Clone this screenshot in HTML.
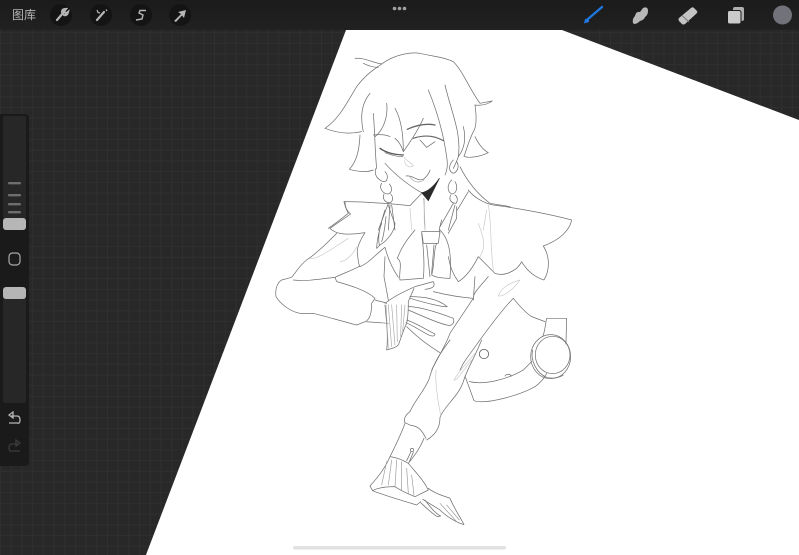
<!DOCTYPE html>
<html><head><meta charset="utf-8">
<style>
html,body{margin:0;padding:0;width:799px;height:555px;overflow:hidden;background:#262626}
#w{position:relative;width:799px;height:555px;overflow:hidden;contain:paint}
#s{position:absolute;left:-10px;top:-10px;filter:blur(.35px)}
.lbl{position:absolute;left:12px;top:8px;font:12px/15px "Liberation Sans","Noto Sans CJK SC",sans-serif;color:#b5b5b5;filter:blur(.3px)}
.l path,.l circle,.l ellipse{fill:none;stroke:#707070;stroke-width:2.2;stroke-linecap:round;stroke-linejoin:round}
.l .f{stroke:#c8c8c8;stroke-width:2}
</style></head><body><div id="w">
<svg id="s" width="819" height="575" viewBox="-10 -10 819 575" xmlns="http://www.w3.org/2000/svg">
<defs>
<pattern id="g" width="10.700" height="10.700" patternUnits="userSpaceOnUse"><rect width="11" height="11" fill="#282828"/><path d="M0 .5H11M.5 0V11" stroke="#2f2f2f"/></pattern>
<linearGradient id="top" x1="0" y1="0" x2="0" y2="1"><stop offset="0" stop-color="#191919"/><stop offset="1" stop-color="#212121"/></linearGradient>
</defs>
<rect x="-10" y="-10" width="819" height="575" fill="url(#g)"/>
<polygon points="346,30 562,30 812,125 812,568 141,568" fill="#fff"/>
<rect x="-10" y="-10" width="819" height="40" fill="url(#top)"/>

<!-- sidebar -->
<rect x="-6" y="114" width="35" height="352" rx="4" fill="#1a1a1a"/>
<rect x="3" y="116" width="23" height="106" rx="2" fill="#272727"/>
<rect x="3" y="296" width="23" height="107" rx="2" fill="#272727"/>
<g fill="#6e6e6e"><rect x="8" y="182" width="13" height="2.400" rx="1"/><rect x="8" y="194" width="13" height="2.400" rx="1"/><rect x="8" y="203" width="13" height="2.400" rx="1"/><rect x="8" y="211" width="13" height="2.400" rx="1"/></g>
<rect x="3" y="218" width="23" height="12" rx="3" fill="#b6b6b6"/>
<rect x="3" y="287" width="23" height="12" rx="3" fill="#b6b6b6"/>
<rect x="9" y="253" width="11" height="12" rx="3.500" fill="#1c1c1c" stroke="#a8a8a8" stroke-width="1.200"/>
<path d="M9 415L13 412V418ZM11 416H17Q20 416 20 420T17 423H9" fill="none" stroke="#b5b5b5" stroke-width="1.300"/>
<path d="M20 443L16 440V446ZM18 444H12Q9 444 9 448T12 451H20" fill="none" stroke="#3c3c3c" stroke-width="1.300"/>

<!-- top left icons -->
<g fill="#141414"><circle cx="61" cy="15" r="11"/><circle cx="101" cy="15" r="11"/><circle cx="141" cy="15" r="11"/><circle cx="180" cy="15" r="11"/></g>
<path d="M57 20L63 13M62 12Q62 9 66 9L64 11.500L66 13.500L68 12Q67 16 64 15" fill="none" stroke="#b5b5b5" stroke-width="2.200" stroke-linecap="round"/>
<path d="M97 20L104 12" stroke="#b5b5b5" stroke-width="2.200" stroke-linecap="round"/>
<path d="M97 10L98 12.500L100 13M106 9.500L107 11" stroke="#b5b5b5" stroke-width="1.200" fill="none"/>
<path d="M146 10.500L140 10.500L139 13L143 15L142 19L136 20" fill="none" stroke="#b5b5b5" stroke-width="1.400"/>
<path d="M174 21L181 14L178 12L186 10L184 18L182 15.500L176 22Z" fill="#b5b5b5"/>

<!-- dots -->
<g fill="#a0a0a0"><circle cx="394.500" cy="8.500" r="1.800"/><circle cx="399.500" cy="8.500" r="1.800"/><circle cx="404.500" cy="8.500" r="1.800"/></g>

<!-- right icons -->
<path d="M588 19L602 7" stroke="#1f78e0" stroke-width="2.300" stroke-linecap="round"/>
<path d="M584 23.500L585 19L589 18.500L589 22Z" fill="#1f78e0"/>
<path d="M633 23Q632 19 635 16Q636 11 640 12L643 8Q648 6 648 11Q648 15 645 17Q644 20 640 21Q637 24 634 24Z" fill="#b8b8b8"/>
<path d="M679 18L691 8Q693 6 695 9L697 11Q698 12 696 14L685 24Q683 25 682 24L679 21Q678 19 679 18Z" fill="#c4c4c4"/>
<path d="M682 15.500L689 22" stroke="#777" stroke-width="1"/>
<rect x="733" y="7" width="11" height="14" rx="2" fill="#b0b0b0"/>
<rect x="727.500" y="10.500" width="13.500" height="13.500" rx="2" fill="#cacaca" stroke="#1c1c1c" stroke-width="1"/>
<circle cx="782.500" cy="15" r="9.500" fill="#72727a"/>

<!-- home bar -->
<rect x="293" y="546" width="213" height="3.500" rx="1.700" fill="#e2e2e2"/>

<!-- head (zoom 5 coords) -->
<g class="l" transform="translate(320,40) scale(.3333)">
<path d="M105,55C130,52 160,68 185,72M130,70C145,78 160,82 175,82"/>
<path d="M15,265C60,235 85,180 110,140C140,100 170,82 200,62C230,45 270,35 300,40C330,48 370,50 400,65C430,95 450,150 480,190L517,183C500,195 480,197 465,195"/>
<path d="M15,265C40,275 80,285 125,275"/>
<path d="M120,285C118,330 110,365 88,388C110,395 140,398 160,390"/>
<path d="M130,275C120,230 125,190 150,160"/>
<path d="M160,220C165,280 165,340 170,385"/>
<path d="M200,190C205,230 190,270 165,290"/>
<path d="M225,205C245,240 250,290 250,335C245,320 238,305 225,295"/>
<path d="M310,235C295,270 275,300 250,335"/>
<path d="M325,150C350,210 370,280 380,350C385,380 380,395 375,405" />
<path d="M375,135C395,220 425,280 415,350C410,365 405,375 400,385"/>
<path d="M465,195C470,230 470,260 460,275C450,295 440,325 432,350"/>
<path d="M430,260C440,300 430,330 415,350"/>
<path d="M465,290C475,310 490,330 505,338C480,350 450,355 435,350"/>
<path d="M160,285C180,283 200,285 210,290"/>
<path d="M180,325C200,340 230,345 250,345" style="stroke:#555;stroke-width:4"/>
<path d="M195,338C215,346 235,350 248,350"/>
<path d="M262,268C290,255 320,250 345,255" style="stroke:#666;stroke-width:4"/>
<path d="M280,295C310,285 340,285 370,302" style="stroke:#666;stroke-width:3.500"/>
<path d="M300,300L320,322L345,305"/>
<path class="f" d="M252,352C258,362 276,368 280,378C268,385 256,378 253,362"/>
<path d="M258,408C280,405 290,425 310,418C322,408 328,398 330,390"/>
<path d="M270,412C285,430 300,428 312,420" style="stroke:#aaa"/>
<path d="M195,370C230,410 280,445 305,458"/>
<path d="M305,458L325,482L358,415C345,435 325,455 305,458Z" style="fill:#2a2a2a;stroke:#2a2a2a"/>
<path d="M168,385C160,405 175,420 190,425C205,425 205,405 195,395M185,430C175,445 190,462 205,462C220,455 215,440 208,432M192,462C185,480 200,490 212,488C222,478 218,468 212,462"/>
<path d="M400,360C385,375 385,395 400,400C415,395 418,375 410,365M395,420C380,435 382,455 395,462C410,462 415,440 405,425M392,465C385,480 395,490 408,490C415,480 412,470 405,465"/>
<path d="M72,485C120,485 200,490 270,497L305,460"/>
<path d="M72,485C75,500 80,510 85,520C60,540 40,555 25,565"/>
<path d="M420,380C440,420 470,460 510,490L570,500"/>
<path d="M445,455L412,510"/>
<path d="M205,490L175,570M210,495L205,570M215,495L225,570"/>
<path d="M312,475L315,570" style="stroke:#999"/>
<path d="M400,490L360,560M405,495L385,570"/>
<path class="f" d="M270,505L275,570M500,510L490,570"/>
</g>

<!-- torso (zoom 6 coords) -->
<g class="l" transform="translate(260,190) scale(.3333)">
<path d="M255,35C255,55 262,65 272,72L210,115C225,130 250,138 315,128C300,150 290,175 292,190C295,210 295,225 300,230C325,220 345,195 375,172C385,210 400,240 415,262"/>
<path d="M625,0C640,20 670,40 700,45C780,55 880,75 935,90C930,120 900,150 850,168C870,200 870,240 852,270C820,260 800,240 785,215C770,245 730,260 705,250C690,235 665,210 655,200C640,230 620,260 595,275C580,255 570,230 565,200"/>
<path d="M590,50L590,85L565,130"/>
<path class="f" d="M685,45C695,100 690,160 700,240"/>
<path d="M375,60C365,90 350,150 350,175L360,165C385,150 405,120 405,100C395,80 390,60 385,45M365,100C355,125 355,150 358,165M378,80C375,110 370,140 365,155"/>
<path d="M465,120C440,150 425,170 412,205C430,215 415,250 420,270C445,270 465,265 490,265C495,220 490,170 485,130"/>
<path d="M485,125L540,125L535,160L490,160Z"/>
<path d="M540,120C570,150 575,200 570,265C555,265 530,265 515,255C525,220 520,180 530,160M545,90C540,110 535,120 540,130"/>
<path d="M500,165L510,260M522,165L515,250"/>
<path d="M230,130C200,160 170,190 140,210C120,225 105,250 95,262L65,270C50,280 45,300 48,320C60,340 90,365 120,370L160,370C200,380 250,395 290,405L315,395L385,400"/>
<path d="M100,270C150,275 190,265 225,262L230,275C265,285 320,300 345,325L335,340C335,365 330,385 320,392"/>
<path d="M300,228C280,240 250,250 225,262"/>
<path class="f" d="M150,205C170,210 210,180 265,145M240,215C260,215 285,185 290,170"/>
<path d="M345,330C360,335 370,335 380,340"/>
<path d="M375,340C400,320 430,305 465,290L520,275C525,285 525,295 495,298"/>
<path d="M375,345C380,400 385,440 380,480C395,475 405,475 415,465C425,440 430,420 440,400C445,380 445,360 445,335L462,295"/>
<path d="M385,345L395,470M395,345L405,465M410,345L412,455M425,345L422,440M435,345L428,425M378,345L385,475" style="stroke:#a8a8a8;stroke-width:2"/>
<path d="M450,320C490,320 530,325 562,350C550,352 500,340 450,325"/>
<path d="M445,350C480,350 540,370 580,385C585,400 575,410 560,405C520,395 470,370 445,360"/>
<path d="M440,390C470,400 500,420 525,432C525,442 510,438 500,432C480,420 455,405 438,398"/>
<path d="M520,305C560,315 600,322 640,325"/>
<path d="M640,325C610,370 590,400 570,430C560,460 530,510 515,540"/>
<path d="M440,410C470,440 510,470 540,488"/>
<path d="M760,325C730,355 680,420 610,520L600,540"/>
<path d="M760,325C780,350 800,370 815,380L855,395"/>
<path d="M860,385L920,385L918,462M860,385C855,410 855,425 848,440"/>
<circle cx="672" cy="492" r="14"/>
<ellipse cx="878" cy="495" rx="52" ry="56"/>
<path d="M375,200L372,260L385,330"/>
<path d="M640,330L645,260M685,260C650,300 640,310 640,325"/>
<path class="f" d="M780,270C760,300 730,320 715,318C725,290 750,280 780,270M490,25C495,60 490,90 495,120M655,100C670,140 680,170 660,200"/>
</g>

<!-- arm and hand (zoom 7 coords) -->
<g class="l" transform="translate(350,340) scale(.3333)">
<path d="M300,0C270,40 250,70 238,115C225,150 195,180 180,215C165,225 160,240 165,248L182,256C205,258 215,270 228,295"/>
<path d="M395,0C375,50 350,90 340,125C325,170 285,195 270,232C270,265 255,285 230,300"/>
<path d="M165,250C150,290 135,320 120,350"/>
<path d="M222,295C210,325 195,345 175,370"/>
<circle cx="186" cy="330" r="5"/>
<path d="M183,335L170,362M190,337L178,365"/>
<path d="M120,350C105,385 85,410 60,438L68,452C85,442 115,440 135,440C150,450 170,460 195,470L235,450C220,420 200,400 175,370C155,358 135,352 120,350"/>
<path d="M68,452C90,462 150,480 200,495L212,485"/>
<path d="M110,365L95,435M125,360L115,435M140,360L135,440M155,365L155,450M170,385L175,460M185,405L192,465" style="stroke:#999;stroke-width:2"/>
<path d="M235,445C260,465 285,468 300,475C315,510 330,530 342,554C320,548 290,530 270,510L218,478"/>
<path d="M225,480C240,500 255,520 272,528L262,530C245,520 225,500 212,488"/>
<path d="M270,490L320,545M290,495L328,540" style="stroke:#999;stroke-width:2"/>
<circle cx="402" cy="42" r="14"/>
<path d="M345,108L372,182C410,195 510,165 555,140C570,130 585,112 590,100"/>
<path d="M358,125C400,135 470,120 520,90L545,65"/>
<ellipse cx="602" cy="50" rx="60" ry="66"/>
<path d="M548,30C540,60 560,100 590,112C610,118 630,112 640,105"/>
<path d="M465,108C470,100 480,102 485,108"/>
<path class="f" d="M375,40C350,70 325,95 312,120C320,125 340,90 365,60M258,90C255,130 265,190 272,225"/>
</g>
</svg>
<div class="lbl">图库</div>
</div></body></html>
